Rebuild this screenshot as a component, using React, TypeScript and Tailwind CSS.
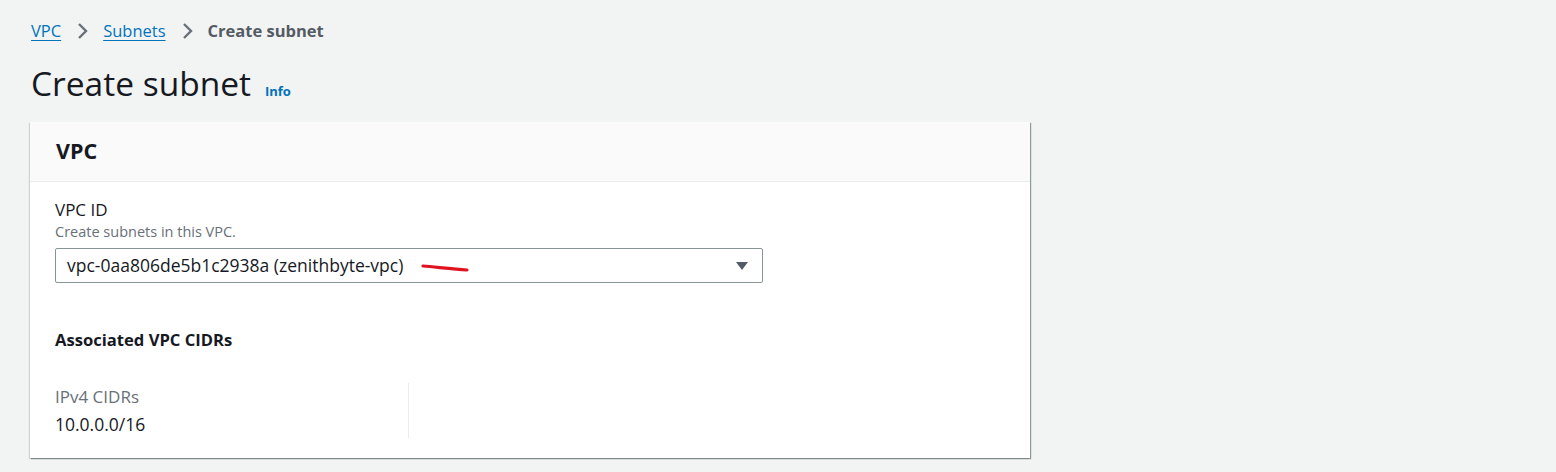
import React from 'react';

const font = { fontFamily: '"Open Sans", "Noto Sans", Arial, sans-serif' };

const Chevron = () => (
  <svg width="14" height="18" viewBox="0 0 14 18" className="mx-[14px] shrink-0">
    <path d="M4 2l7 7-7 7" fill="none" stroke="#687078" strokeWidth="2.4" />
  </svg>
);

export default function App() {
  return (
    <div className="min-h-[472px] w-full bg-[#f2f3f3] text-[#16191f]" style={font}>
      <div className="px-[31px] pt-[18px]">
        <nav className="flex items-center text-[16.5px] leading-[26px]">
          <a className="text-[#0073bb] underline underline-offset-[3px]">VPC</a>
          <Chevron />
          <a className="text-[#0073bb] underline underline-offset-[3px]">Subnets</a>
          <Chevron />
          <span className="font-bold text-[#545b64]">Create subnet</span>
        </nav>

        <div className="mt-[19px] flex items-baseline gap-[14px]">
          <h1 className="text-[33.5px] leading-[40px]">Create subnet</h1>
          <span className="text-[13px] font-bold text-[#0073bb]">Info</span>
        </div>
      </div>

      <div className="ml-[30px] mt-[19px] w-[1000px] bg-white shadow-[1px_1px_1px_0_rgba(0,28,36,0.3),1px_1px_1px_0_rgba(0,28,36,0.15),-1px_1px_1px_0_rgba(0,28,36,0.15)]">
        <div className="flex h-[60px] items-center border-b border-[#eaeded] bg-[#fafafa] px-[26px]">
          <h2 className="text-[21.5px] font-bold">VPC</h2>
        </div>

        <div className="px-[25px] pb-5 pt-[16px]">
          <div className="text-[17px] leading-[24px]">VPC ID</div>
          <div className="text-[14.5px] leading-[20px] text-[#687078]">Create subnets in this VPC.</div>
          <div className="relative mt-[6px] flex h-[35px] w-[708px] items-center justify-between rounded-[2px] border border-[#879596] pl-[11px] pr-[13px]">
            <span className="text-[17.5px]">vpc-0aa806de5b1c2938a (zenithbyte-vpc)</span>
            <svg width="14" height="10" viewBox="0 0 14 10">
              <path d="M1 1h12L7 9z" fill="#545b64" />
            </svg>
            <svg className="absolute left-[365px] top-[14px]" width="48" height="10" viewBox="0 0 48 10">
              <path d="M2 3c12 1 30 3 44 4" fill="none" stroke="#e0141e" strokeWidth="3.2" strokeLinecap="round" />
            </svg>
          </div>

          <h3 className="mt-[45px] text-[16.6px] font-bold">Associated VPC CIDRs</h3>

          <div className="mt-[30px] grid grid-cols-[354px_1fr]">
            <div className="border-r border-[#eaeded] pt-[2px] pb-[2px]">
              <div className="text-[17px] leading-[24px] text-[#687078]">IPv4 CIDRs</div>
              <div className="mt-[3px] text-[17.5px] leading-[24px]">10.0.0.0/16</div>
            </div>
            <div />
          </div>
        </div>
      </div>
    </div>
  );
}
